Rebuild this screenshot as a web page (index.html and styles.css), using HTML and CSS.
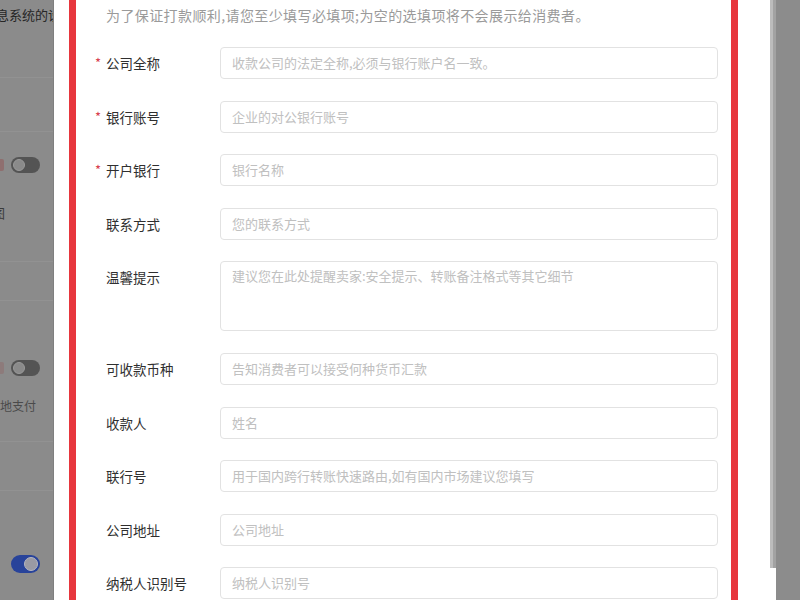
FILE: index.html
```html
<!DOCTYPE html>
<html lang="zh-CN">
<head>
<meta charset="utf-8">
<title>收款信息</title>
<link rel="stylesheet" href="styles.css">
</head>
<body>
<div class="page">
  <aside class="side">
    <div class="s-title">息系统的设</div>
    <div class="s-band h48"></div>
    <div class="s-band h54"></div>
    <div class="s-toggle-row h66"><span class="s-red"></span><span class="tog"><span class="knob"></span></span></div>
    <div class="s-text h28 cut">图</div>
    <div class="s-band h36"></div>
    <div class="s-band h39"></div>
    <div class="s-plain h37"></div>
    <div class="s-toggle-row h60"><span class="s-pink"></span><span class="tog"><span class="knob"></span></span></div>
    <div class="s-text h14 small">地支付</div>
    <div class="s-band h29"></div>
    <div class="s-band h49"></div>
    <div class="s-plain h43"></div>
    <div class="s-toggle-row h60"><span class="tog on"><span class="knob"></span></span></div>
  </aside>

  <section class="modal">
    <div class="frame">
      <div class="form">
        <p class="notice">为了保证打款顺利,请您至少填写必填项;为空的选填项将不会展示给消费者。</p>
        <div class="rows">
          <div class="row"><div class="label"><span class="req">*</span>公司全称</div><div class="field">收款公司的法定全称,必须与银行账户名一致。</div></div>
          <div class="row"><div class="label"><span class="req">*</span>银行账号</div><div class="field">企业的对公银行账号</div></div>
          <div class="row"><div class="label"><span class="req">*</span>开户银行</div><div class="field">银行名称</div></div>
          <div class="row"><div class="label"><span class="req"></span>联系方式</div><div class="field">您的联系方式</div></div>
          <div class="row"><div class="label"><span class="req"></span>温馨提示</div><div class="field area">建议您在此处提醒卖家:安全提示、转账备注格式等其它细节</div></div>
          <div class="row"><div class="label"><span class="req"></span>可收款币种</div><div class="field">告知消费者可以接受何种货币汇款</div></div>
          <div class="row"><div class="label"><span class="req"></span>收款人</div><div class="field">姓名</div></div>
          <div class="row"><div class="label"><span class="req"></span>联行号</div><div class="field">用于国内跨行转账快速路由,如有国内市场建议您填写</div></div>
          <div class="row"><div class="label"><span class="req"></span>公司地址</div><div class="field">公司地址</div></div>
          <div class="row"><div class="label"><span class="req"></span>纳税人识别号</div><div class="field">纳税人识别号</div></div>
        </div>
      </div>
    </div>
    <div class="scrollbar"><div class="thumb"></div></div>
  </section>

  <div class="backdrop"></div>
</div>
</body>
</html>
```

FILE: styles.css
```css
html, body {
  margin: 0;
  padding: 0;
}
body {
  width: 800px;
  height: 600px;
  overflow: hidden;
  background: #8c8c8c;
  font-family: "Noto Sans CJK SC", "Noto Sans", "Liberation Sans", sans-serif;
}
.page {
  display: flex;
  height: 600px;
}

/* dimmed page on the left */
.side {
  width: 53px;
  flex: none;
  background: #8b8b8b;
  border-right: 1px solid #7f7f7f;
  overflow: hidden;
  display: flex;
  flex-direction: column;
}
.s-title {
  height: 30px;
  line-height: 30px;
  font-size: 13px;
  color: #262626;
  white-space: nowrap;
  margin-left: -4px;
}
.s-band { border-bottom: 1px solid #929292; flex: none; }
.s-plain { flex: none; }
.h14 { height: 14px; }
.h28 { height: 28px; }
.h29 { height: 29px; }
.h36 { height: 35px; }
.h37 { height: 37px; }
.h39 { height: 38px; }
.h43 { height: 43px; }
.h48 { height: 47px; }
.h49 { height: 48px; }
.h54 { height: 53px; }
.h60 { height: 60px; }
.h66 { height: 66px; }
.s-toggle-row {
  flex: none;
  display: flex;
  align-items: center;
  padding-left: 11px;
}
.s-red, .s-pink {
  width: 4px;
  height: 12px;
  background: #8f6f6f;
  margin-left: -11px;
  margin-right: 7px;
  border-radius: 0 2px 2px 0;
}
.s-pink { background: #8d7b7b; }
.tog {
  width: 29px;
  height: 16px;
  border-radius: 8px;
  background: #545454;
  display: flex;
  align-items: center;
  padding: 0 2px;
  box-sizing: border-box;
}
.tog .knob {
  width: 12px;
  height: 12px;
  border-radius: 50%;
  background: #8a8a8a;
  border: 1px solid #9a9a9a;
  box-sizing: border-box;
}
.tog.on {
  background: #28439a;
  justify-content: flex-end;
  height: 18px;
  border-radius: 9px;
}
.tog.on .knob {
  width: 14px;
  height: 14px;
  background: #9a9aa4;
  border-color: #b7b7c0;
}
.s-text {
  flex: none;
  font-size: 12px;
  color: #3a3a3a;
  white-space: nowrap;
  display: flex;
  align-items: center;
}
.s-text.cut { margin-left: -8px; font-size: 13px; }
.s-text.small { color: #4a4a4a; }

/* modal */
.modal {
  width: 722px;
  flex: none;
  background: #ffffff;
  display: flex;
  padding-left: 15px;
  box-sizing: border-box;
}
.frame {
  width: 669px;
  flex: none;
  box-sizing: border-box;
  border-left: 7px solid #e7363d;
  border-right: 7px solid #e7363d;
  height: 600px;
}
.form {
  padding: 0 13px 0 18px;
}
.notice {
  margin: 5px 0 0 12px;
  line-height: 20px;
  font-size: 14px;
  letter-spacing: 0.4px;
  color: #9a9a9a;
  white-space: nowrap;
}
.rows {
  margin-top: 22px;
  display: flex;
  flex-direction: column;
  gap: 21.6px;
}
.row {
  display: flex;
  align-items: flex-start;
}
.label {
  width: 126px;
  flex: none;
  height: 32px;
  line-height: 32px;
  font-size: 13.5px;
  color: #2f2f2f;
  white-space: nowrap;
  display: flex;
}
.req {
  width: 11px;
  padding-left: 1px;
  flex: none;
  color: #d8404e;
  font-size: 13px;
}
.field {
  width: 498px;
  height: 32px;
  box-sizing: border-box;
  border: 1px solid #e2e2e2;
  border-radius: 4px;
  padding: 0 11px;
  line-height: 30px;
  font-size: 13px;
  color: #c0c0c0;
  white-space: nowrap;
  overflow: hidden;
}
.field.area {
  height: 70px;
  line-height: 20px;
  padding-top: 4px;
}

/* scrollbar of the modal */
.scrollbar {
  margin-left: auto;
  width: 6px;
  flex: none;
  background: #ffffff;
}
.thumb {
  height: 568px;
  background: linear-gradient(to right, #bcbcbc 0, #bcbcbc 3px, #a2a2a2 3px);
}

.backdrop {
  flex: 1;
  background: #8c8c8c;
}
```
